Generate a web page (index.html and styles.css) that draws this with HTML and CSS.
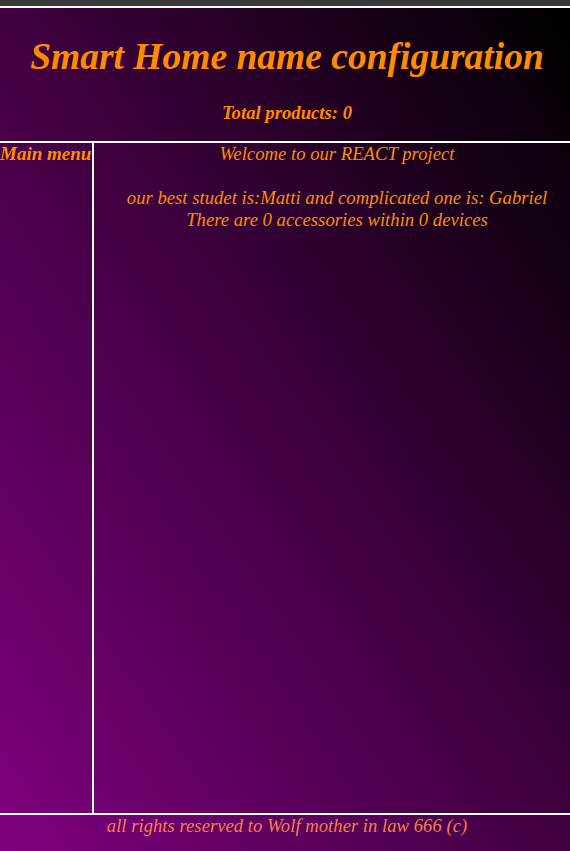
FILE: index.html
```html
<!DOCTYPE html>
<html>
<head>
<meta charset="utf-8">
<link rel="stylesheet" href="styles.css">
</head>
<body>
<div class="topbar"></div>
<div class="page">
  <header class="header">
    <h1 class="title">Smart Home name configuration</h1>
    <div class="total">Total products: 0</div>
  </header>
  <div class="middle">
    <nav class="menu">Main menu</nav>
    <main class="content">
      <div class="line">Welcome to our REACT project</div>
      <div class="line">&nbsp;</div>
      <div class="line">our best studet is:Matti and complicated one is: Gabriel</div>
      <div class="line">There are 0 accessories within 0 devices</div>
    </main>
  </div>
  <footer class="footer">all rights reserved to Wolf mother in law 666 (c)</footer>
</div>
</body>
</html>
```

FILE: styles.css
```css
html, body {
  margin: 0;
  padding: 0;
  height: 100%;
}
body {
  background: #000;
  font-family: "Liberation Serif", "Times New Roman", serif;
  color: #ff8c00;
  display: flex;
  flex-direction: column;
}
.topbar {
  height: 6px;
  background: #3a3a3a;
  border-bottom: 2px solid #fff;
  flex: none;
}
.page {
  flex: 1;
  display: flex;
  flex-direction: column;
  background: linear-gradient(to top right, #800080, #000000);
}
.header {
  height: 135px;
  display: flex;
  flex-direction: column;
  align-items: center;
  padding-left: 4px;
  border-bottom: 2px solid #fff;
  box-sizing: border-box;
}
.title {
  margin: 28px 0 0;
  font-size: 37.5px;
  font-style: italic;
  font-weight: bold;
  line-height: 42px;
}
.total {
  margin-top: 24px;
  font-size: 18.7px;
  font-style: italic;
  font-weight: bold;
}
.middle {
  flex: 1;
  display: flex;
  border-bottom: 2px solid #fff;
}
.menu {
  width: 92px;
  border-right: 2px solid #fff;
  font-size: 19px;
  font-style: italic;
  font-weight: bold;
  line-height: 22px;
  white-space: nowrap;
}
.content {
  flex: 1;
  text-align: center;
  padding-left: 10px;
  font-size: 18.7px;
  font-style: italic;
  line-height: 22px;
  color: #ff8c00;
}
.footer {
  height: 36px;
  text-align: center;
  padding-left: 4px;
  font-size: 18.7px;
  font-style: italic;
  line-height: 22px;
  color: #f5804a;
}
```
